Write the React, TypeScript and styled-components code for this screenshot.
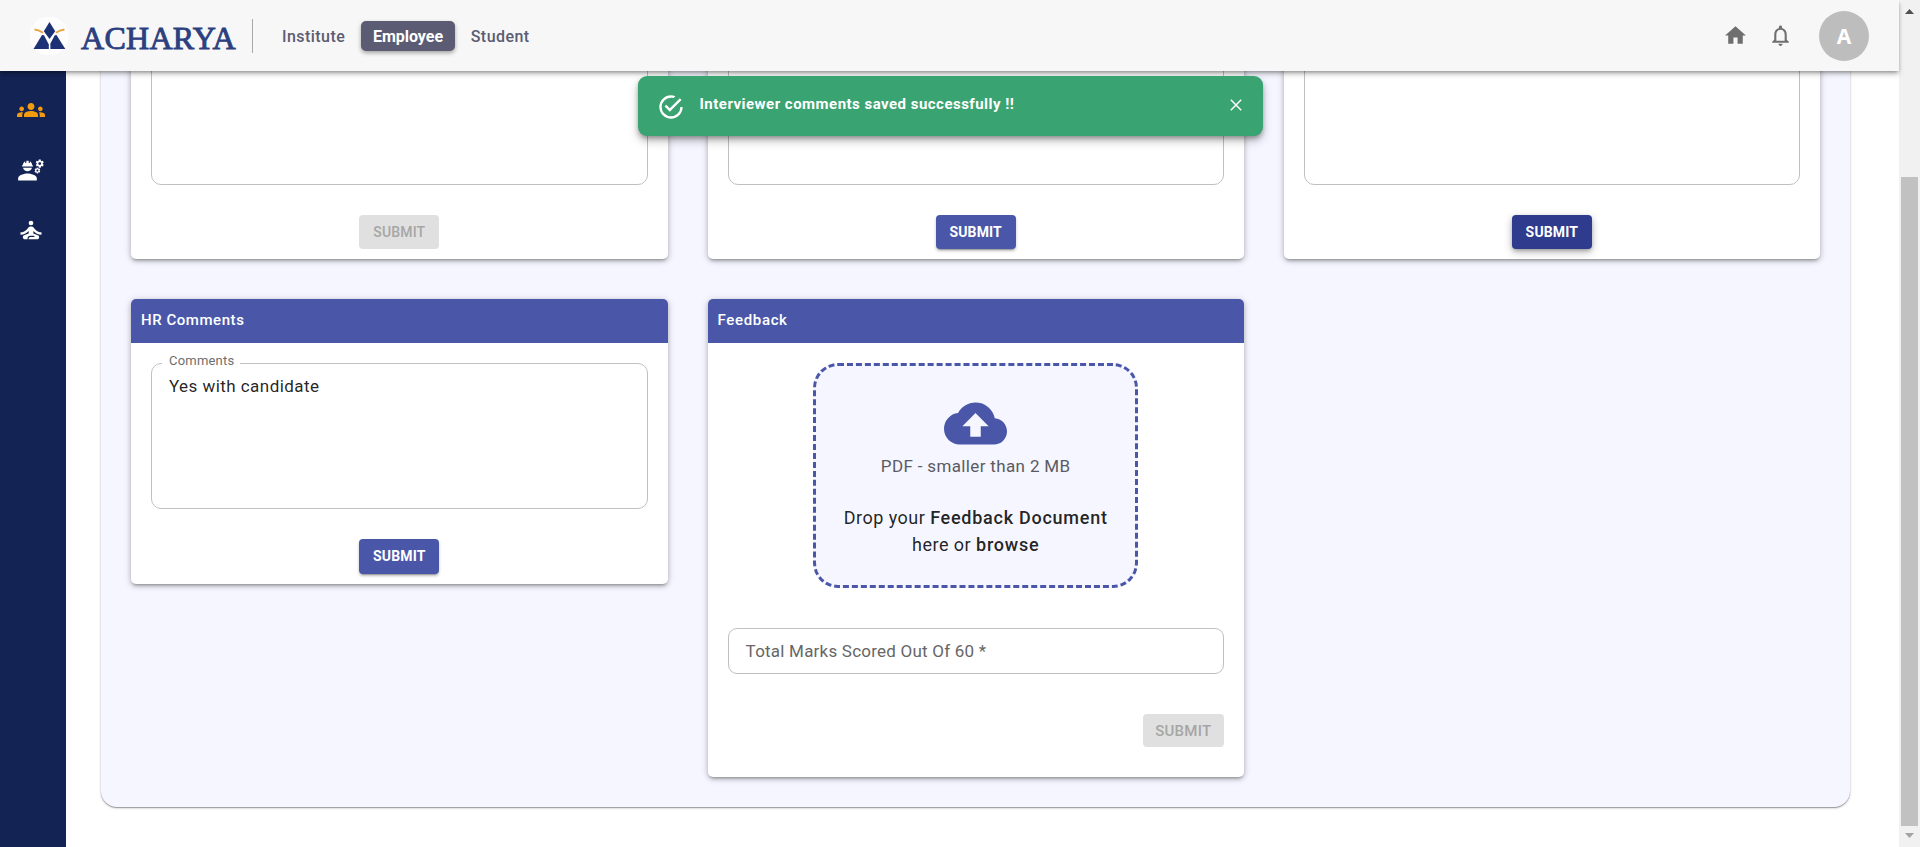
import React from 'react';
import styled, { createGlobalStyle } from 'styled-components';
import {
  MdCloudUpload,
  MdEngineering,
  MdGroups,
  MdHome,
  MdNotificationsNone,
  MdSelfImprovement,
} from 'react-icons/md';

const PRIMARY = '#4a57a9';
const PRIMARY_DARK = '#2f3b8d';
const NAVY = '#132353';

const GlobalStyle = createGlobalStyle`
  *, *::before, *::after { box-sizing: border-box; }
  html, body { margin: 0; height: 100%; overflow: hidden; }
  body {
    font-family: Roboto, "Liberation Sans", sans-serif;
    font-size: 16px;
    color: rgba(0, 0, 0, 0.87);
    background: #fff;
  }
  p, h2 { margin: 0; }
`;

const Window = styled.div`
  display: flex;
  width: 1920px;
  height: 847px;
  overflow: hidden;
`;

const Page = styled.div`
  flex: 1;
  min-width: 0;
  display: flex;
  flex-direction: column;
  position: relative;
`;

/* Top bar */

const Header = styled.header`
  flex: none;
  display: flex;
  align-items: center;
  height: 71px;
  padding: 0 30px 0 29px;
  background: #f7f7f7;
  box-shadow: 0 2px 4px -1px rgba(0, 0, 0, 0.4), 0 4px 5px rgba(0, 0, 0, 0.14);
  z-index: 2;
`;

const Brand = styled.div`
  display: flex;
  align-items: center;
  width: 224px;
  height: 34px;
  margin-top: 1px;
  border-right: 1px solid #a8a8a8;
`;

const LogoMark = styled.svg`
  display: block;
  width: 40px;
  height: 38px;
  flex: none;
`;

const LogoText = styled.span`
  margin-left: 12px;
  font: 32px/34px "Liberation Serif", serif;
  letter-spacing: 0.3px;
  color: #2c3f7f;
  -webkit-text-stroke: 0.9px #2c3f7f;
  white-space: nowrap;
  padding-top: 4px;
`;

const Nav = styled.nav`
  display: flex;
  align-items: center;
  gap: 16px;
  margin-left: 29px;
`;

const NavLink = styled.a<{ $active?: boolean }>`
  display: flex;
  align-items: center;
  justify-content: center;
  height: 30px;
  padding: ${(p) => (p.$active ? '1px 11.7px 0' : '1px 0 0')};
  border-radius: 5px;
  font-weight: ${(p) => (p.$active ? 700 : 500)};
  letter-spacing: ${(p) => (p.$active ? '-0.02px' : '0.45px')};
  color: ${(p) => (p.$active ? '#fff' : '#5b5c73')};
  background: ${(p) => (p.$active ? '#5b5c73' : 'transparent')};
  box-shadow: ${(p) => (p.$active ? '0 2px 4px rgba(0, 0, 0, 0.35)' : 'none')};
`;

const HeaderActions = styled.div`
  display: flex;
  align-items: center;
  gap: 20px;
  margin-left: auto;
  color: #6f6f6f;
  svg { display: block; }
`;

const Avatar = styled.div`
  display: flex;
  align-items: center;
  justify-content: center;
  width: 50px;
  height: 50px;
  margin-left: 6px;
  border-radius: 50%;
  background: #bdbdbd;
  color: #fff;
  font: 700 21px "Noto Sans", sans-serif;
`;

/* Body */

const Body = styled.div`
  flex: 1;
  min-height: 0;
  display: flex;
`;

const Sidebar = styled.aside`
  flex: none;
  display: flex;
  flex-direction: column;
  align-items: center;
  gap: 32px;
  width: 66px;
  padding: 25px 4px 0 0;
  background: ${NAVY};
`;

const SideItem = styled.a<{ $active?: boolean }>`
  display: block;
  height: 28px;
  color: ${(p) => (p.$active ? '#f29b0e' : '#fff')};
  svg { display: block; }
`;

const Content = styled.main`
  flex: 1;
  min-width: 0;
  display: flex;
  flex-direction: column;
  justify-content: flex-end;
  overflow: hidden;
  padding: 0 49px 40px 35px;
`;

const Panel = styled.section`
  display: grid;
  grid-template-columns: 536.6px 536.2px 536.2px;
  gap: 40px;
  align-items: start;
  padding: 30px;
  border-radius: 16px;
  background: #f5f6ff;
  box-shadow: 0 1px 1px rgba(0, 0, 0, 0.3), 0 1px 3px rgba(0, 0, 0, 0.2);
`;

const Card = styled.article`
  display: flex;
  flex-direction: column;
  border-radius: 5px;
  overflow: hidden;
  background: #fff;
  box-shadow: 0 3px 3px -2px rgba(0, 0, 0, 0.25), 0 2px 5px rgba(0, 0, 0, 0.2),
    0 1px 8px rgba(0, 0, 0, 0.14);
`;

const CardTitle = styled.h2<{ $track?: number }>`
  height: 44px;
  padding: 0 10px;
  background: ${PRIMARY};
  color: #fff;
  font-size: 15px;
  font-weight: 500;
  line-height: 42px;
  letter-spacing: ${(p) => p.$track ?? 0.55}px;
`;

const CommentBody = styled.div`
  display: flex;
  flex-direction: column;
  align-items: center;
  height: 240.5px;
  padding: 20px 20px 10px;
`;

const TextBox = styled.fieldset`
  width: 100%;
  height: 153px;
  margin: -7px 0 0;
  padding: 0 17px;
  border: 1px solid #c0c0c0;
  border-radius: 10px;
  min-width: 0;
  legend {
    height: 15px;
    margin-left: -7px;
    padding: 0 6px 0 7px;
    font-size: 13px;
    line-height: 9px;
    letter-spacing: 0.2px;
    color: #6e6e6e;
  }
  p {
    margin-top: 4px;
    font-size: 17px;
    line-height: 23px;
    letter-spacing: 0.45px;
  }
`;

const Submit = styled.button<{ $tone?: 'dark' | 'disabled'; $wide?: boolean }>`
  flex: none;
  height: ${(p) => (p.$wide ? 33 : 34.5)}px;
  width: ${(p) => (p.$wide ? 81 : 80)}px;
  padding: 0;
  border: 0;
  border-radius: 4px;
  font: 500 ${(p) => (p.$wide ? 15 : 14)}px Roboto, sans-serif;
  font-weight: ${(p) => (p.$tone === 'disabled' ? 500 : 700)};
  letter-spacing: ${(p) => (p.$wide ? 0.25 : 0.15)}px;
  color: ${(p) => (p.$tone === 'disabled' ? '#a6a6a6' : '#fff')};
  background: ${(p) =>
    p.$tone === 'disabled' ? '#e0e0e0' : p.$tone === 'dark' ? PRIMARY_DARK : PRIMARY};
  box-shadow: ${(p) =>
    p.$tone === 'disabled'
      ? 'none'
      : p.$tone === 'dark'
        ? '0 2px 4px -1px rgba(0,0,0,.3), 0 3px 8px rgba(0,0,0,.25)'
        : '0 3px 1px -2px rgba(0,0,0,.2), 0 2px 3px rgba(0,0,0,.25)'};
`;

const CardSubmit = styled(Submit)`
  margin-top: auto;
`;

const FeedbackBody = styled.div`
  display: flex;
  flex-direction: column;
  align-items: center;
  height: 434px;
  padding: 20px 20px 30px;
`;

const DropZone = styled.div`
  display: flex;
  flex-direction: column;
  align-items: center;
  width: 325px;
  height: 225px;
  padding-top: 26px;
  border: 3px dashed ${PRIMARY};
  border-radius: 25px;
  background: #f5f6ff;
  text-align: center;
  svg { display: block; color: ${PRIMARY}; }
`;

const Hint = styled.p`
  margin-top: -1px;
  font-size: 17px;
  line-height: 24px;
  letter-spacing: 0.35px;
  color: #5a5b62;
`;

const DropText = styled.p`
  margin-top: 26px;
  font-size: 18px;
  line-height: 27px;
  letter-spacing: 0.47px;
  white-space: nowrap;
  b {
    font-weight: 500;
    letter-spacing: 0.74px;
  }
`;

const MarksField = styled.div`
  align-self: stretch;
  height: 46px;
  margin-top: 40px;
  padding: 0 17px;
  border: 1px solid #c0c0c0;
  border-radius: 9px;
  font-size: 17px;
  line-height: 44px;
  letter-spacing: 0.22px;
  color: #666;
`;

const FeedbackSubmit = styled(Submit)`
  align-self: flex-end;
  margin-top: auto;
`;

/* Toast lies over the page, under the top bar */

const Toast = styled.div`
  position: absolute;
  top: 76px;
  left: 637.5px;
  z-index: 3;
  display: flex;
  align-items: flex-start;
  width: 625px;
  height: 60px;
  padding: 17px 20.5px 0 19.5px;
  border-radius: 9px;
  background: #39a371;
  color: #fff;
  box-shadow: 0 3px 5px -1px rgba(0, 0, 0, 0.3), 0 5px 10px rgba(0, 0, 0, 0.25);
  svg { display: block; flex: none; }
  p {
    margin: -1px auto 0 14.5px;
    font-size: 15px;
    font-weight: 700;
    line-height: 24px;
    letter-spacing: 0.48px;
  }
`;

const CloseIcon = styled.svg`
  width: 12px;
  height: 12px;
  margin-top: 6px;
`;

/* Window scroll bar */

const ScrollBar = styled.div`
  flex: none;
  display: flex;
  flex-direction: column;
  align-items: center;
  width: 21px;
  background: #f1f1f1;
  padding: 9px 1px 9px 0;
`;

const Arrow = styled.svg`
  display: block;
  width: 9px;
  height: 5px;
`;

const Thumb = styled.div`
  width: 17px;
  height: 649px;
  margin: auto 0 7px;
  background: #c1c1c1;
`;

function Logo() {
  return (
    <Brand>
      <LogoMark viewBox="0 0 40 38">
        <circle cx="20" cy="19" r="19.5" fill="#fdfdfd" />
        <path d="M20.5 5 L26.2 14.2 L20.5 22 L14.8 14.2 Z" fill="#1d3275" />
        <path d="M13 18 L15 18.3 L19.8 27.5 V32 H4.5 Z" fill="#1d3275" />
        <path d="M27.5 18 L25.8 18.3 L21.4 26.5 V32 H36.3 Z" fill="#1d3275" />
        <path d="M5.5 12.5 Q10.5 13 14 15.8" fill="none" stroke="#e9a445" strokeWidth="1.9" />
        <path d="M35.5 12.5 Q30.5 13 27 15.8" fill="none" stroke="#e9a445" strokeWidth="1.9" />
      </LogoMark>
      <LogoText>ACHARYA</LogoText>
    </Brand>
  );
}

function CommentCard({
  title,
  text,
  tone,
}: {
  title?: string;
  text?: string;
  tone?: 'dark' | 'disabled';
}) {
  return (
    <Card>
      <CardTitle>{title}</CardTitle>
      <CommentBody>
        <TextBox>
          {text && <legend>Comments</legend>}
          {text && <p>{text}</p>}
        </TextBox>
        <CardSubmit $tone={tone}>SUBMIT</CardSubmit>
      </CommentBody>
    </Card>
  );
}

export default function App() {
  return (
    <Window>
      <GlobalStyle />
      <Page>
        <Header>
          <Logo />
          <Nav>
            <NavLink>Institute</NavLink>
            <NavLink $active>Employee</NavLink>
            <NavLink>Student</NavLink>
          </Nav>
          <HeaderActions>
            <MdHome size={25} />
            <MdNotificationsNone size={25} />
            <Avatar>A</Avatar>
          </HeaderActions>
        </Header>
        <Body>
          <Sidebar>
            <SideItem $active><MdGroups size={28} /></SideItem>
            <SideItem><MdEngineering size={28} /></SideItem>
            <SideItem><MdSelfImprovement size={28} /></SideItem>
          </Sidebar>
          <Content>
            <Panel>
              <CommentCard tone="disabled" />
              <CommentCard />
              <CommentCard tone="dark" />
              <CommentCard title="HR Comments" text="Yes with candidate" />
              <Card>
                <CardTitle $track={0.65}>Feedback</CardTitle>
                <FeedbackBody>
                  <DropZone>
                    <MdCloudUpload size={63} />
                    <Hint>PDF - smaller than 2 MB</Hint>
                    <DropText>
                      Drop your <b>Feedback Document</b>
                      <br />
                      here or <b>browse</b>
                    </DropText>
                  </DropZone>
                  <MarksField>Total Marks Scored Out Of 60 *</MarksField>
                  <FeedbackSubmit $tone="disabled" $wide>SUBMIT</FeedbackSubmit>
                </FeedbackBody>
              </Card>
            </Panel>
          </Content>
        </Body>
        <Toast>
          <svg width="28" height="28" viewBox="0 0 24 24" fill="currentColor">
            <path d="M20,12A8,8 0 0,1 12,20A8,8 0 0,1 4,12A8,8 0 0,1 12,4C12.76,4 13.5,4.11 14.2,4.31L15.77,2.74C14.61,2.26 13.34,2 12,2A10,10 0 0,0 2,12A10,10 0 0,0 12,22A10,10 0 0,0 22,12M7.91,10.08L6.5,11.5L11,16L21,6L19.59,4.58L11,13.17L7.91,10.08Z" />
          </svg>
          <p>Interviewer comments saved successfully !!</p>
          <CloseIcon viewBox="0 0 12 12" stroke="currentColor" strokeWidth="1.5">
            <path d="M0.8 0.8 L11.2 11.2 M11.2 0.8 L0.8 11.2" />
          </CloseIcon>
        </Toast>
      </Page>
      <ScrollBar>
        <Arrow viewBox="0 0 9 5"><path d="M0 5 L4.5 0 L9 5 Z" fill="#505050" /></Arrow>
        <Thumb />
        <Arrow viewBox="0 0 9 5"><path d="M0 0 L4.5 5 L9 0 Z" fill="#a3a3a3" /></Arrow>
      </ScrollBar>
    </Window>
  );
}
